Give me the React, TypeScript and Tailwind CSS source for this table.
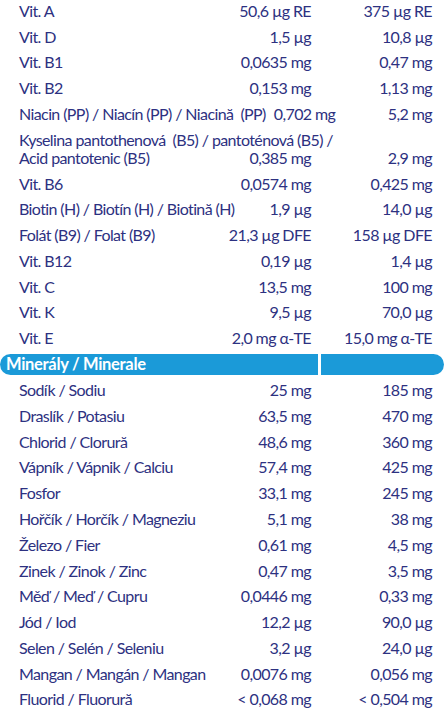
import React from "react";

type Row = { label: string; a: string; b: string };

const vitamins: Row[] = [
  { label: "Vit. A", a: "50,6 µg RE", b: "375 µg RE" },
  { label: "Vit. D", a: "1,5 µg", b: "10,8 µg" },
  { label: "Vit. B1", a: "0,0635 mg", b: "0,47 mg" },
  { label: "Vit. B2", a: "0,153 mg", b: "1,13 mg" },
  { label: "Niacin (PP) / Niacín (PP) / Niacină  (PP)", a: "0,702 mg", b: "5,2 mg" },
];

const vitamins2: Row[] = [
  { label: "Vit. B6", a: "0,0574 mg", b: "0,425 mg" },
  { label: "Biotin (H) / Biotín (H) / Biotină (H)", a: "1,9 µg", b: "14,0 µg" },
  { label: "Folát (B9) / Folat (B9)", a: "21,3 µg DFE", b: "158 µg DFE" },
  { label: "Vit. B12", a: "0,19 µg", b: "1,4 µg" },
  { label: "Vit. C", a: "13,5 mg", b: "100 mg" },
  { label: "Vit. K", a: "9,5 µg", b: "70,0 µg" },
  { label: "Vit. E", a: "2,0 mg α-TE", b: "15,0 mg α-TE" },
];

const minerals: Row[] = [
  { label: "Sodík / Sodiu", a: "25 mg", b: "185 mg" },
  { label: "Draslík / Potasiu", a: "63,5 mg", b: "470 mg" },
  { label: "Chlorid / Clorură", a: "48,6 mg", b: "360 mg" },
  { label: "Vápník / Vápnik / Calciu", a: "57,4 mg", b: "425 mg" },
  { label: "Fosfor", a: "33,1 mg", b: "245 mg" },
  { label: "Hořčík / Horčík / Magneziu", a: "5,1 mg", b: "38 mg" },
  { label: "Železo / Fier", a: "0,61 mg", b: "4,5 mg" },
  { label: "Zinek / Zinok / Zinc", a: "0,47 mg", b: "3,5 mg" },
  { label: "Měď / Meď / Cupru", a: "0,0446 mg", b: "0,33 mg" },
  { label: "Jód / Iod", a: "12,2 µg", b: "90,0 µg" },
  { label: "Selen / Selén / Seleniu", a: "3,2 µg", b: "24,0 µg" },
  { label: "Mangan / Mangán / Mangan", a: "0,0076 mg", b: "0,056 mg" },
  { label: "Fluorid / Fluorură", a: "< 0,068 mg", b: "< 0,504 mg" },
];

function TableRow({ r }: { r: Row }) {
  return (
    <div className="flex py-[3.9px] pl-[19px] leading-[18px]">
      <div className="flex w-[292px] justify-between gap-2">
        <span className="whitespace-pre">{r.label}</span>
        <span className="whitespace-nowrap">{r.a}</span>
      </div>
      <div className="w-[121px] text-right whitespace-nowrap">{r.b}</div>
    </div>
  );
}

export default function App() {
  return (
    <div
      className="w-[444px] h-[713px] overflow-hidden bg-white text-[16px] text-[#2d3181] -tracking-[0.6px]"
      style={{ fontFamily: "Lato, 'Open Sans', sans-serif" }}
    >
      <div className="-mt-[2px]">
        {vitamins.map((r) => (
          <TableRow key={r.label} r={r} />
        ))}

        {/* B5 – zwei Zeilen */}
        <div className="flex items-end py-[3.9px] pl-[19px] leading-[18px]">
          <div className="w-[292px]">
            <div className="whitespace-pre">Kyselina pantothenová  (B5) / pantoténová (B5) /</div>
            <div className="flex justify-between">
              <span>Acid pantotenic (B5)</span>
              <span>0,385 mg</span>
            </div>
          </div>
          <div className="w-[121px] text-right">2,9 mg</div>
        </div>

        {vitamins2.map((r) => (
          <TableRow key={r.label} r={r} />
        ))}

        <div className="flex gap-[3px] pt-[3px] pb-[2px]">
          <div className="flex h-[21px] w-[318px] items-center rounded-l-full bg-[#1b9ad8] pl-[6px] text-[16.5px] font-bold tracking-[-0.3px] text-white">
            Minerály / Minerale
          </div>
          <div className="h-[21px] w-[123px] rounded-r-full bg-[#1b9ad8]" />
        </div>

        {minerals.map((r) => (
          <TableRow key={r.label} r={r} />
        ))}
      </div>
    </div>
  );
}
